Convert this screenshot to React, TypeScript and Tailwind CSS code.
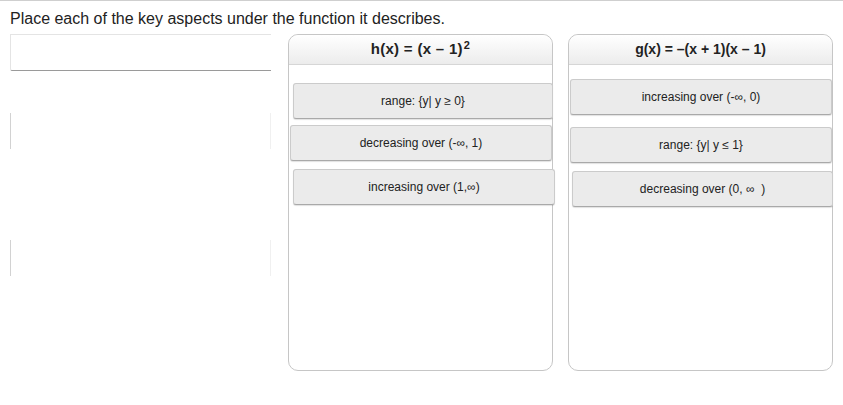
import React from "react"

type Item = { label: React.ReactNode; cls: string }

function Card({ label, cls }: Item) {
  return (
    <div
      className={`h-[36px] shrink-0 flex items-center justify-center bg-[#ebebeb] border border-[#cbcbcb] border-b-[#a9a9a9] rounded-[3px] shadow-[0_1px_1px_rgba(0,0,0,0.12)] text-[12px] text-[#222] ${cls}`}
    >
      {label}
    </div>
  )
}

function Column({ title, items }: { title: React.ReactNode; items: Item[] }) {
  return (
    <div className="w-[265px] h-[337px] shrink-0 border border-[#c6c6c6] rounded-[10px] bg-white flex flex-col">
      <div className="h-[30px] shrink-0 rounded-t-[10px] bg-gradient-to-b from-white to-[#ececec] border-b border-[#d6d6d6] flex items-center justify-center font-bold text-[#222]">
        {title}
      </div>
      {items.map((it, i) => (
        <Card key={i} {...it} />
      ))}
    </div>
  )
}

export default function App() {
  const left: Item[] = [
    { label: "range: {y| y ≥ 0}", cls: "mt-[18px] ml-[4px] -mr-[1px]" },
    { label: "decreasing over (-∞, 1)", cls: "mt-[6px] ml-[1px] mr-0" },
    { label: "increasing over (1,∞)", cls: "mt-[8px] ml-[4px] -mr-[3px]" },
  ]
  const right: Item[] = [
    { label: "increasing over (-∞, 0)", cls: "mt-[14px] ml-[1px] mr-0" },
    { label: "range: {y| y ≤ 1}", cls: "mt-[12px] ml-[1px] mr-0" },
    { label: "decreasing over (0, ∞ \u00a0)", cls: "mt-[8px] ml-[3px] -mr-[1px]" },
  ]

  return (
    <div className="w-[843px] h-[405px] bg-white border-t border-[#cfcfcf] font-['Liberation_Sans',Arial,sans-serif] overflow-hidden">
      <p className="pl-[10px] pt-[8px] h-[33px] text-[16px] leading-[20px] text-[#222]">
        Place each of the key aspects under the function it describes.
      </p>
      <div className="flex pl-[10px]">
        <div className="w-[261px] shrink-0 flex flex-col">
          <div className="h-[37px] border-l border-t border-[#e4e4e4] border-b-[#9a9a9a] border-b rounded-bl-[2px]" />
          <div className="h-[36px] mt-[42px] border-l border-r border-l-[#d2d2d2] border-r-[#f0f0f0]" />
          <div className="h-[36px] mt-[91px] border-l border-r border-l-[#d2d2d2] border-r-[#f0f0f0]" />
        </div>
        <div className="flex gap-[15px] ml-[17px]">
          <Column
            title={
              <span className="text-[15px] tracking-[0.3px]">
                h(x) = (x – 1)<sup className="text-[11px] ml-[1px]">2</sup>
              </span>
            }
            items={left}
          />
          <Column title={<span className="text-[14px]">g(x) = –(x + 1)(x – 1)</span>} items={right} />
        </div>
      </div>
    </div>
  )
}
